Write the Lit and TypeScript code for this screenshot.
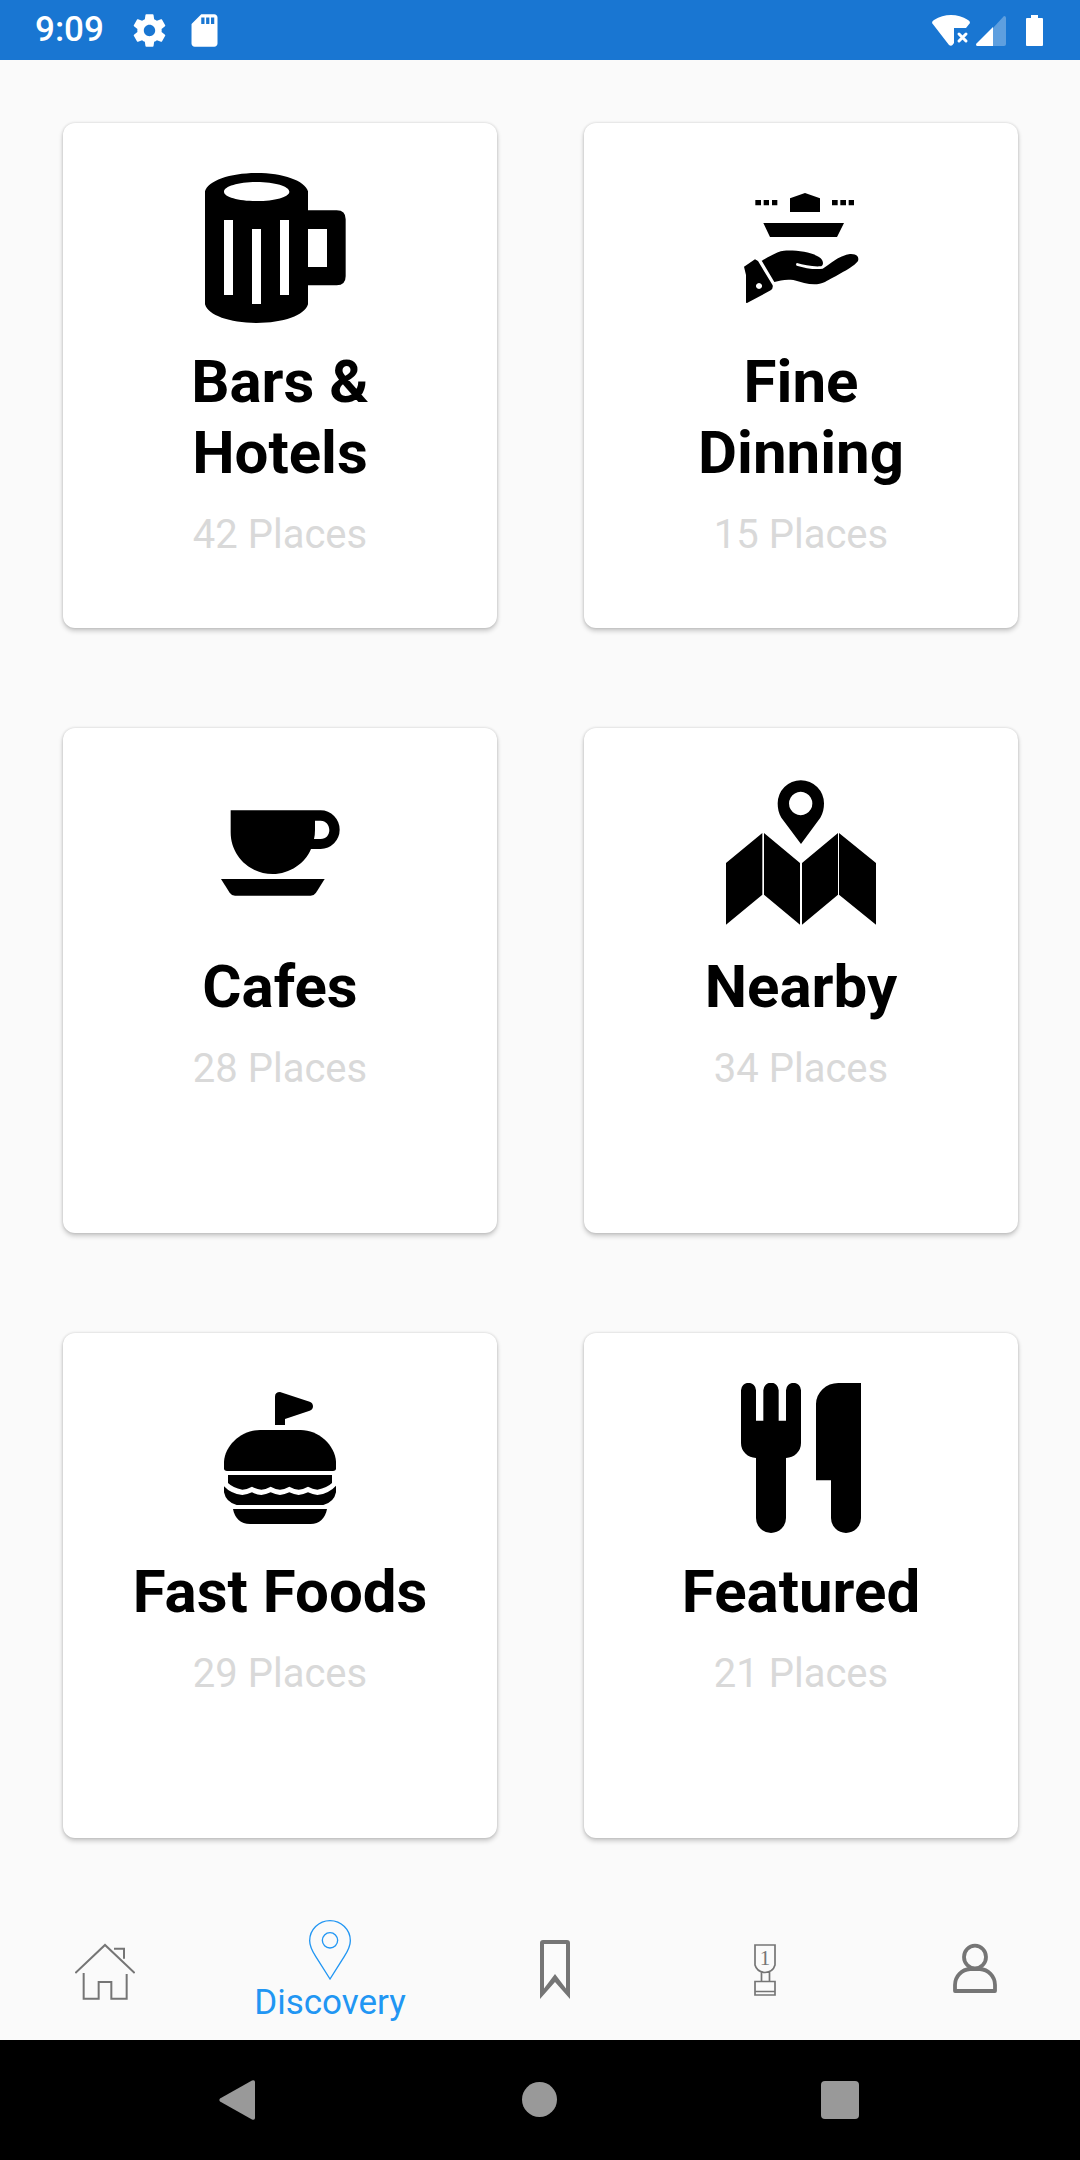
import { LitElement, html, svg, css, type SVGTemplateResult } from "lit";
import { customElement, property, state } from "lit/decorators.js";
import { classMap } from "lit/directives/class-map.js";

interface Art {
  box: string;
  shape: SVGTemplateResult;
}

interface Category {
  title: string;
  places: number;
  art: Art;
}

interface Tab {
  label: string;
  art: Art;
}

const mug: Art = {
  box: "75 69 450 450",
  shape: svg`<path fill-rule="evenodd" d="M75 124C84 92 150 69 229.500 69S375 92 384 124V181H470Q497 181 497 208V379Q497 406 470 406H384V463C375 496 309 519 229.500 519S84 496 75 463ZM384 237V351H441V237ZM132 210V435H159V210ZM216 237V462H243V237ZM300 210V435H327V210ZM132 125C132 109 176 96 230 96S328 109 328 125S284 153 230 153S132 141 132 125Z"/>`,
};

const dining: Art = {
  box: "78 39 450 450",
  shape: svg`
    <path d="M166 120h17v16h-17zM191 120h16v16h-16zM216 120h16v16h-16zM396 120h17v16h-17zM421 120h17v16h-17zM446 120h16v16h-16z"/>
    <path d="M270 156V115L315 99L360 115V156ZM190 189H432L411 231H210Z"/>
    <path d="M185 302C205 292 232 273 252 272C290 270 340 276 362 295C373 306 370 319 360 319C335 320 310 315 291 309Q286 312 290 317C315 324 345 330 368 326C388 314 415 287 450 282C470 281 478 290 474 303C464 320 400 352 375 366C345 380 315 370 280 360C255 357 240 362 223 366Z"/>
    <path fill-rule="evenodd" d="M165 298L174 303L218 376Q220 386 212 391L141 429L138 428L138 345L132 320ZM177 369a9 9 0 1 0 .1 0Z"/>`,
};

const cup: Art = {
  box: "75 24 450 450",
  shape: svg`
    <path fill-rule="evenodd" d="M152 121H422A57 58 0 0 1 422 237H393C375 280 330 312 278 312C208 312 152 257 152 187ZM405 152V180Q405 195 402 207H422C438 207 448 195 448 180S438 152 422 152Z"/>
    <path d="M123 327H434L408 368Q402 377 392 377H165Q155 377 149 368Z"/>`,
};

const map: Art = {
  box: "78 54 450 450",
  shape: svg`
    <path fill-rule="evenodd" d="M303 252L244 173C236 160 233 145 233 130A69.500 69.500 0 0 1 372 130C372 145 369 160 361 173ZM302 95.500a35 35 0 1 0 .1 0Z"/>
    <path d="M78 309L187 219V404L78 494ZM192 219L300 309V494L192 404ZM306 309L414 219V404L306 494ZM417 219L528 309V494L417 404Z"/>`,
};

const burger: Art = {
  box: "75 39 450 450",
  shape: svg`
    <path d="M285 165V80Q285 66 300 66L389 95Q399 99 399 109T389 122L315 147V165Z"/>
    <path d="M132 295V275C135 225 185 180 240 180H362C415 180 465 225 468 275V295Q468 303 459 303H141Q132 303 132 295Z"/>
    <path d="M144 315H456V339Q442 353 412 359Q398 357 384 350Q370 358 356 359Q342 358 328 350Q314 358 300 359Q286 358 272 350Q258 358 244 359Q230 358 216 350Q202 358 187 359Q158 353 144 339Z"/>
    <path d="M132 349Q152 371 187 375Q202 374 216 367Q230 374 244 375Q258 374 272 367Q286 374 300 375Q314 374 328 367Q342 374 356 375Q370 374 384 367Q398 374 412 375Q448 370 468 347V367Q462 397 430 405H170Q138 397 132 367Z"/>
    <path d="M159 417H441C436 445 418 462 392 462H210C182 462 164 445 159 417Z"/>`,
};

const cutlery: Art = {
  box: "78 69 450 450",
  shape: svg`
    <path d="M123 91A22.500 22.500 0 0 1 168 91V182H190V91A23 23 0 0 1 236 91V182H258V91A22.500 22.500 0 0 1 303 91V249A45 45 0 0 1 258 294V474A45 45 0 0 1 168 474V294A45 45 0 0 1 123 249Z"/>
    <path d="M415 69H483V474A45 45 0 0 1 393 474V361H348V132A67 63 0 0 1 415 69Z"/>`,
};

const home: Art = {
  box: "105 150 180 180",
  shape: svg`<path fill="none" stroke="currentColor" stroke-width="6" d="M106 249L195 165L284 249M222 176H252V206M131 249V326H176V276H214V326H260V252"/>`,
};

const pin: Art = {
  box: "780 90 180 180",
  shape: svg`
    <path fill="none" stroke="currentColor" stroke-width="4" d="M870 267L827 199C813 177 809 167 809 152A61 60 0 0 1 931 152C931 167 927 177 913 199Z"/>
    <circle fill="none" stroke="currentColor" stroke-width="4" cx="870" cy="151" r="23"/>`,
};

const bookmark: Art = {
  box: "0 0 60 60",
  shape: svg`<path fill-rule="evenodd" d="M15 59V3Q15 0 18 0H42Q45 0 45 3V59L30 42ZM19 4V48.500L30 34L41 48.500V4Z"/>`,
};

const trophy: Art = {
  box: "0 0 60 60",
  shape: svg`
    <path fill="none" stroke="currentColor" stroke-width="1.700" d="M20 5H40V25Q38 32 30 32.500Q22 32 20 25ZM26.500 32V41.500M34.500 32V41.500M20 41.500H40V55H20ZM20 51.500H40"/>
    <text class="rank" x="30" y="25" text-anchor="middle">1</text>`,
};

const person: Art = {
  box: "0 0 60 60",
  shape: svg`
    <g fill="none" stroke="currentColor" stroke-width="3.800" stroke-linejoin="round">
      <ellipse cx="30" cy="17" rx="11" ry="11.300"/>
      <path d="M10 51V45C10 36 17 29.500 25 29H35C43 29.500 50 36 50 45V51Z"/>
    </g>`,
};

const categories: Category[] = [
  { title: "Bars & Hotels", places: 42, art: mug },
  { title: "Fine Dinning", places: 15, art: dining },
  { title: "Cafes", places: 28, art: cup },
  { title: "Nearby", places: 34, art: map },
  { title: "Fast Foods", places: 29, art: burger },
  { title: "Featured", places: 21, art: cutlery },
];

const tabs: Tab[] = [
  { label: "Home", art: home },
  { label: "Discovery", art: pin },
  { label: "Saved", art: bookmark },
  { label: "Rewards", art: trophy },
  { label: "Profile", art: person },
];

@customElement("status-bar")
export class StatusBar extends LitElement {
  static styles = css`
    :host {
      display: flex;
      align-items: center;
      height: 60px;
      padding: 0 37px 0 35px;
      box-sizing: border-box;
      background: #1976d2;
      color: #fff;
      fill: currentColor;
      font: 500 35px/42px Roboto, sans-serif;
    }
    .notices,
    .signals {
      display: flex;
      align-items: center;
    }
    .notices {
      gap: 16px;
      margin-left: 26px;
    }
    .signals {
      gap: 6px;
      margin-left: auto;
    }
    .battery {
      margin-left: 14px;
    }
    svg {
      display: block;
    }
  `;

  render() {
    return html`
      <time>9:09</time>
      <div class="notices">
        <svg width="39" height="39" viewBox="0 0 24 24" aria-hidden="true">
          <path d="M19.430 12.980c.04-.32.07-.64.07-.98s-.03-.66-.07-.98l2.110-1.650c.19-.15.24-.42.12-.64l-2-3.460c-.12-.22-.39-.3-.61-.22l-2.490 1c-.52-.4-1.080-.73-1.690-.98l-.38-2.650C14.460 2.180 14.250 2 14 2h-4c-.25 0-.46.18-.49.42l-.38 2.650c-.61.25-1.170.59-1.690.98l-2.490-1c-.23-.09-.49 0-.61.22l-2 3.460c-.13.22-.07.49.12.64l2.110 1.650c-.04.32-.07.65-.07.98s.03.66.07.98l-2.110 1.650c-.19.15-.24.42-.12.64l2 3.460c.12.22.39.3.61.22l2.490-1c.52.4 1.080.73 1.690.98l.38 2.650c.03.24.24.42.49.42h4c.25 0 .46-.18.49-.42l.38-2.650c.61-.25 1.170-.59 1.690-.98l2.490 1c.23.09.49 0 .61-.22l2-3.460c.12-.22.07-.49-.12-.64l-2.110-1.650zM12 15.500c-1.930 0-3.500-1.570-3.500-3.500s1.570-3.500 3.500-3.500 3.500 1.570 3.500 3.500-1.570 3.500-3.500 3.500z"/>
        </svg>
        <svg width="39" height="39" viewBox="0 0 24 24" aria-hidden="true">
          <path d="M18 2h-8L4.020 8 4 20c0 1.100.9 2 2 2h12c1.100 0 2-.9 2-2V4c0-1.100-.9-2-2-2zm-6 6h-2V4h2v4zm3 0h-2V4h2v4zm3 0h-2V4h2v4z"/>
        </svg>
      </div>
      <div class="signals">
        <svg width="38" height="31" viewBox="0 0 38 31" aria-hidden="true">
          <path d="M0 8Q0 6 2 5Q10 0 19 0T36 5Q38 6 38 8L34 13H22V28L20.500 30Q19 31.500 17 30Z"/>
          <path fill="none" stroke="currentColor" stroke-width="3" stroke-linecap="round" d="M27 19l7 7M34 19l-7 7"/>
        </svg>
        <svg width="30" height="31" viewBox="0 0 30 31" aria-hidden="true">
          <path opacity=".3" d="M17 13L28 1Q30 1 30 3V29Q30 31 28 31H17Z"/>
          <path d="M17 12V31H1Q0 31 0 29Z"/>
        </svg>
        <svg class="battery" width="17" height="31" viewBox="0 0 17 31" aria-hidden="true">
          <path d="M5 0H12V3H16Q17 3 17 4V30Q17 31 16 31H1Q0 31 0 30V4Q0 3 1 3H5Z"/>
        </svg>
      </div>
    `;
  }
}

@customElement("category-card")
export class CategoryCard extends LitElement {
  static styles = css`
    :host {
      display: block;
    }
    .card {
      display: flex;
      flex-direction: column;
      align-items: center;
      gap: 23px;
      height: 100%;
      box-sizing: border-box;
      padding: 50px 60px;
      border-radius: 12px;
      background: #fff;
      box-shadow: 0 3px 5px rgba(0, 0, 0, 0.2), 0 0 3px rgba(0, 0, 0, 0.16);
      color: #000;
      text-align: center;
      text-decoration: none;
    }
    .art {
      width: 150px;
      height: 150px;
      fill: currentColor;
    }
    .title {
      margin: 0;
      font-size: 60px;
      font-weight: 700;
      line-height: 71px;
    }
    .places {
      margin: 0;
      color: #d9d9d9;
      font-size: 40px;
      line-height: 47px;
    }
  `;

  @property({ attribute: false }) category!: Category;

  render() {
    const { title, places, art } = this.category;
    return html`
      <a class="card" href="#places">
        <svg class="art" viewBox=${art.box} aria-hidden="true">${art.shape}</svg>
        <h2 class="title">${title}</h2>
        <p class="places">${places} Places</p>
      </a>
    `;
  }
}

@customElement("tab-bar")
export class TabBar extends LitElement {
  static styles = css`
    :host {
      display: block;
    }
    .tabs {
      display: flex;
      height: 140px;
    }
    .tab {
      flex: 7 1 0;
      min-width: 0;
      display: flex;
      flex-direction: column;
      align-items: center;
      justify-content: center;
      padding: 0;
      border: 0;
      background: none;
      color: #757575;
      font: 35px/42px Roboto, sans-serif;
    }
    .active {
      flex-grow: 8;
      gap: 2px;
      padding-top: 4px;
      color: #2196f3;
    }
    .icon {
      width: 60px;
      height: 60px;
      fill: currentColor;
    }
    .rank {
      font: 21px "Liberation Serif", serif;
    }
  `;

  @state() private current = "Discovery";

  render() {
    return html`
      <nav class="tabs">
        ${tabs.map(({ label, art }) => {
          const active = label === this.current;
          return html`
            <button
              class=${classMap({ tab: true, active })}
              aria-label=${label}
              @click=${() => (this.current = label)}
            >
              <svg class="icon" viewBox=${art.box} aria-hidden="true">${art.shape}</svg>
              ${active ? html`<span>${label}</span>` : ""}
            </button>
          `;
        })}
      </nav>
    `;
  }
}

@customElement("system-bar")
export class SystemBar extends LitElement {
  static styles = css`
    :host {
      display: flex;
      height: 120px;
      padding: 0 90px;
      background: #000;
    }
    .key {
      flex: 1;
      display: flex;
      align-items: center;
      justify-content: center;
      padding: 0;
      border: 0;
      background: none;
      color: #999;
    }
    .glyph {
      width: 60px;
      height: 60px;
      fill: currentColor;
    }
  `;

  render() {
    return html`
      <button class="key" aria-label="Back">
        <svg class="glyph" viewBox="0 0 60 60">
          <path d="M10 28.500L42 10.500Q45 9.500 45 12V48Q45 50.500 42 49.500L10 31.500Q8.500 30 10 28.500Z"/>
        </svg>
      </button>
      <button class="key" aria-label="Home">
        <svg class="glyph" viewBox="0 0 60 60"><circle cx="29.500" cy="29.500" r="17.500"/></svg>
      </button>
      <button class="key" aria-label="Overview">
        <svg class="glyph" viewBox="0 0 60 60"><rect x="11" y="11" width="38" height="38" rx="4"/></svg>
      </button>
    `;
  }
}

@customElement("app-root")
export class AppRoot extends LitElement {
  static styles = css`
    :host {
      display: flex;
      flex-direction: column;
      min-height: 100vh;
      background: #fafafa;
      font-family: Roboto, sans-serif;
    }
    .grid {
      flex: 1;
      display: grid;
      grid-template-columns: repeat(2, minmax(0, 1fr));
      grid-auto-rows: minmax(505px, auto);
      align-content: start;
      gap: 100px 87px;
      padding: 63px 62px 62px 63px;
    }
  `;

  render() {
    return html`
      <status-bar></status-bar>
      <main class="grid">
        ${categories.map((item) => html`<category-card .category=${item}></category-card>`)}
      </main>
      <tab-bar></tab-bar>
      <system-bar></system-bar>
    `;
  }
}
